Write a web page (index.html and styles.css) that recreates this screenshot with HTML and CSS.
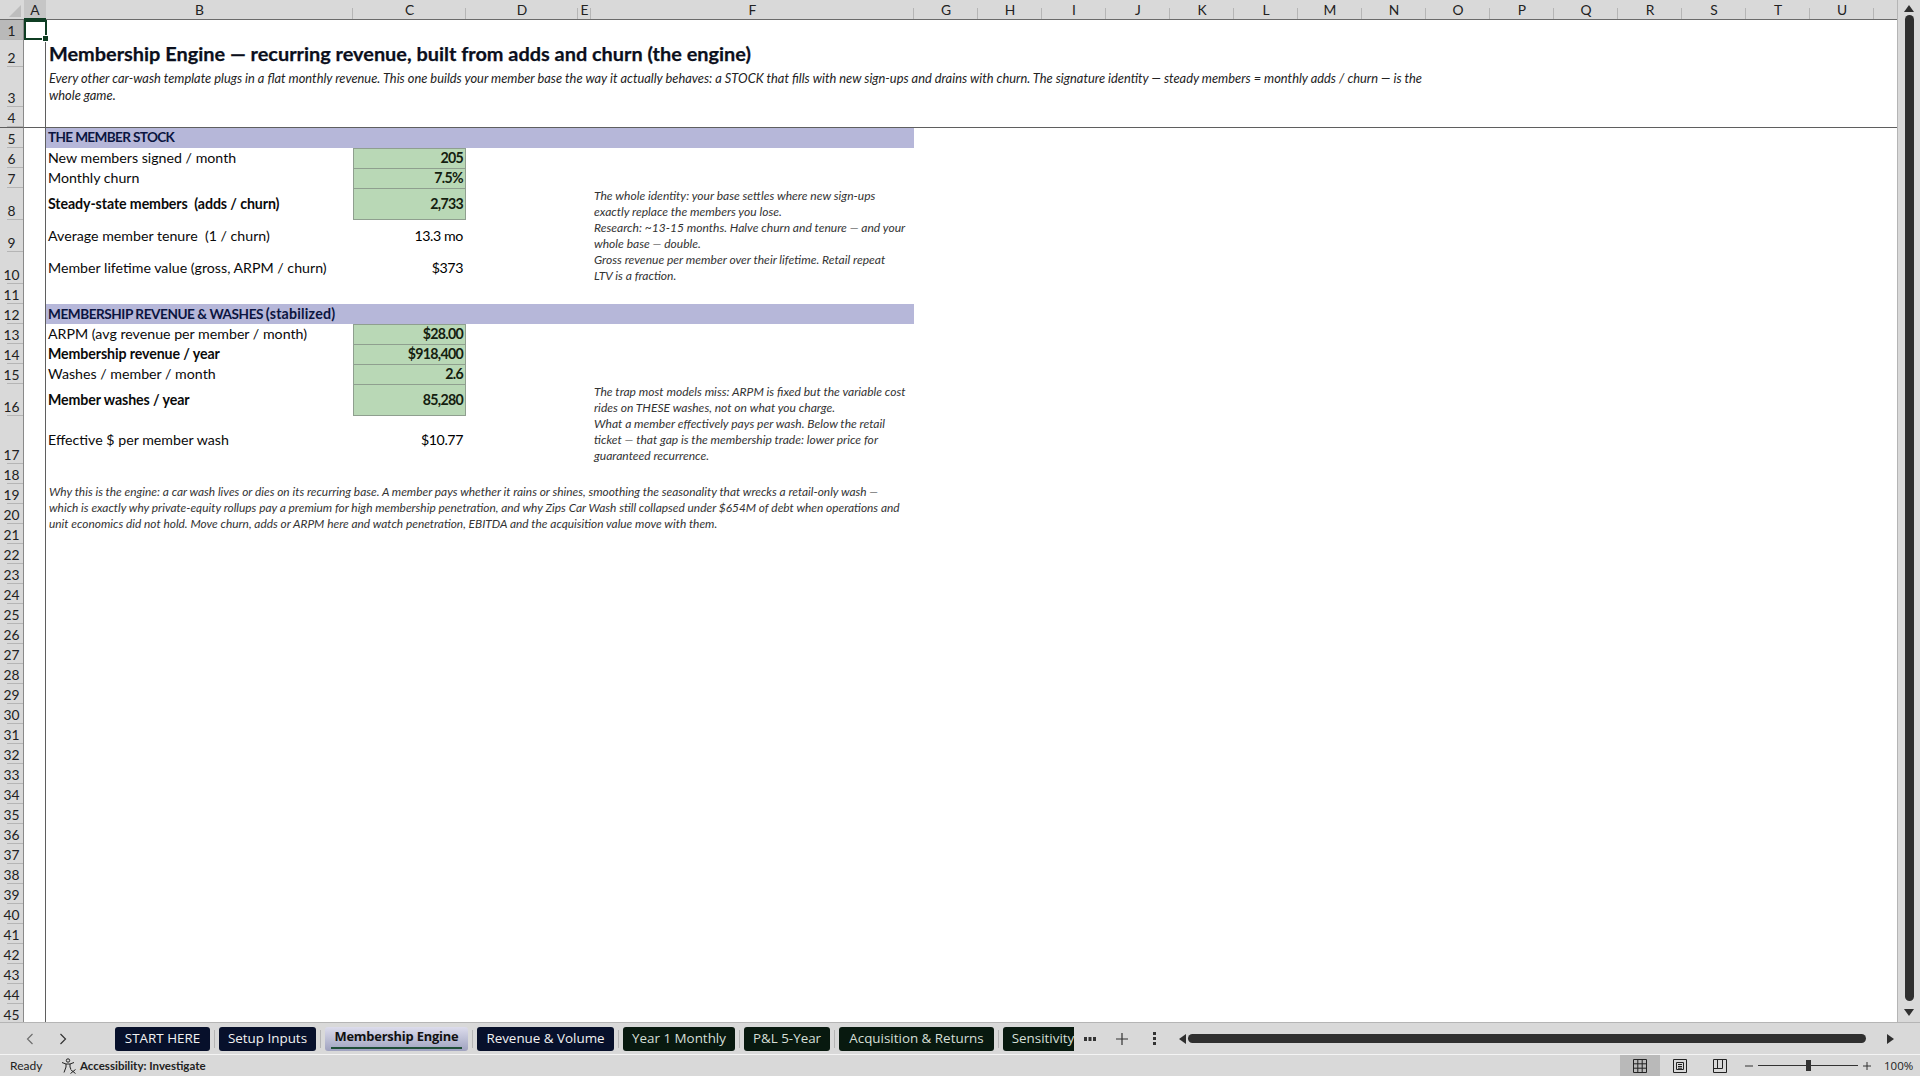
FILE: index.html
```html
<!DOCTYPE html>
<html lang="en">
<head>
    <meta charset="UTF-8">
    <title>Membership Engine</title>
    <link rel="stylesheet" href="styles.css">
</head>
<body>
    <div class="workspace">
        <div class="sheet">
            <div class="selection"></div>
            <table class="grid">
                <colgroup>
                    <col class="w-head"><col class="w-a"><col class="w-b"><col class="w-c"><col class="w-d"><col class="w-e"><col class="w-f">
                    <col class="w-n"><col class="w-n"><col class="w-n"><col class="w-n"><col class="w-n"><col class="w-n"><col class="w-n"><col class="w-n">
                    <col class="w-n"><col class="w-n"><col class="w-n"><col class="w-n"><col class="w-n"><col class="w-n"><col class="w-n"><col class="w-v">
                </colgroup>
                <thead>
                    <tr>
                        <th class="corner"><svg width="12" height="12" viewBox="0 0 12 12"><path d="M12 0V12H0Z" fill="#bdbdbd"/></svg></th>
                        <th class="ch on">A</th><th class="ch">B</th><th class="ch">C</th><th class="ch">D</th><th class="ch">E</th><th class="ch">F</th>
                        <th class="ch">G</th><th class="ch">H</th><th class="ch">I</th><th class="ch">J</th><th class="ch">K</th><th class="ch">L</th><th class="ch">M</th><th class="ch">N</th>
                        <th class="ch">O</th><th class="ch">P</th><th class="ch">Q</th><th class="ch">R</th><th class="ch">S</th><th class="ch">T</th><th class="ch">U</th><th class="ch blank"></th>
                    </tr>
                </thead>
                <tbody>
                    <tr class="h20"><th class="rh on">1</th><td class="a"></td><td colspan="21"></td></tr>
                    <tr class="h27"><th class="rh">2</th><td class="a"></td><td colspan="21" class="title">Membership Engine — recurring revenue, built from adds and churn (the engine)</td></tr>
                    <tr class="h40"><th class="rh">3</th><td class="a"></td><td colspan="21" class="note sub">Every other car-wash template plugs in a flat monthly revenue. This one builds your member base the way it actually behaves: a STOCK that fills with new sign-ups and drains with churn. The signature identity — steady members = monthly adds / churn — is the<br>whole game.</td></tr>
                    <tr class="h21 frozen"><th class="rh">4</th><td class="a"></td><td colspan="21"></td></tr>

                    <tr class="h20"><th class="rh">5</th><td class="a"></td><td colspan="5" class="band tight">THE MEMBER STOCK</td><td colspan="16"></td></tr>
                    <tr class="h20"><th class="rh">6</th><td class="a"></td><td class="label">New members signed / month</td><td class="val input">205</td><td colspan="18"></td></tr>
                    <tr class="h20"><th class="rh">7</th><td class="a"></td><td class="label">Monthly churn</td><td class="val input">7.5%</td><td colspan="18"></td></tr>
                    <tr class="h32"><th class="rh">8</th><td class="a"></td><td class="label strong">Steady-state members&nbsp; (adds / churn)</td><td class="val input">2,733</td><td colspan="2"></td><td class="note">The whole identity: your base settles where new sign-ups<br>exactly replace the members you lose.</td><td colspan="16"></td></tr>
                    <tr class="h32"><th class="rh">9</th><td class="a"></td><td class="label">Average member tenure&nbsp; (1 / churn)</td><td class="val">13.3 mo</td><td colspan="2"></td><td class="note">Research: ~13-15 months. Halve churn and tenure — and your<br>whole base — double.</td><td colspan="16"></td></tr>
                    <tr class="h32"><th class="rh">10</th><td class="a"></td><td class="label">Member lifetime value (gross, ARPM / churn)</td><td class="val">$373</td><td colspan="2"></td><td class="note">Gross revenue per member over their lifetime. Retail repeat<br>LTV is a fraction.</td><td colspan="16"></td></tr>
                    <tr class="h20"><th class="rh">11</th><td class="a"></td><td colspan="21"></td></tr>

                    <tr class="h20"><th class="rh">12</th><td class="a"></td><td colspan="5" class="band">MEMBERSHIP REVENUE &amp; WASHES <span class="lower">(stabilized)</span></td><td colspan="16"></td></tr>
                    <tr class="h20"><th class="rh">13</th><td class="a"></td><td class="label">ARPM (avg revenue per member / month)</td><td class="val input">$28.00</td><td colspan="18"></td></tr>
                    <tr class="h20"><th class="rh">14</th><td class="a"></td><td class="label strong">Membership revenue / year</td><td class="val input">$918,400</td><td colspan="18"></td></tr>
                    <tr class="h20"><th class="rh">15</th><td class="a"></td><td class="label">Washes / member / month</td><td class="val input">2.6</td><td colspan="18"></td></tr>
                    <tr class="h32"><th class="rh">16</th><td class="a"></td><td class="label strong">Member washes / year</td><td class="val input">85,280</td><td colspan="2"></td><td class="note">The trap most models miss: ARPM is fixed but the variable cost<br>rides on THESE washes, not on what you charge.</td><td colspan="16"></td></tr>
                    <tr class="h48"><th class="rh">17</th><td class="a"></td><td class="label">Effective $ per member wash</td><td class="val">$10.77</td><td colspan="2"></td><td class="note">What a member effectively pays per wash. Below the retail<br>ticket — that gap is the membership trade: lower price for<br>guaranteed recurrence.</td><td colspan="16"></td></tr>
                    <tr class="h20"><th class="rh">18</th><td class="a"></td><td colspan="21"></td></tr>

                    <tr class="h20"><th class="rh">19</th><td class="a"></td><td colspan="5" rowspan="3" class="note why">Why this is the engine: a car wash lives or dies on its recurring base. A member pays whether it rains or shines, smoothing the seasonality that wrecks a retail-only wash —<br>which is exactly why private-equity rollups pay a premium for high membership penetration, and why Zips Car Wash still collapsed under $654M of debt when operations and<br>unit economics did not hold. Move churn, adds or ARPM here and watch penetration, EBITDA and the acquisition value move with them.</td><td colspan="16"></td></tr>
                    <tr class="h20"><th class="rh">20</th><td class="a"></td><td colspan="16"></td></tr>
                    <tr class="h20"><th class="rh">21</th><td class="a"></td><td colspan="16"></td></tr>

                    <tr class="h20"><th class="rh">22</th><td class="a"></td><td colspan="21"></td></tr>
                    <tr class="h20"><th class="rh">23</th><td class="a"></td><td colspan="21"></td></tr>
                    <tr class="h20"><th class="rh">24</th><td class="a"></td><td colspan="21"></td></tr>
                    <tr class="h20"><th class="rh">25</th><td class="a"></td><td colspan="21"></td></tr>
                    <tr class="h20"><th class="rh">26</th><td class="a"></td><td colspan="21"></td></tr>
                    <tr class="h20"><th class="rh">27</th><td class="a"></td><td colspan="21"></td></tr>
                    <tr class="h20"><th class="rh">28</th><td class="a"></td><td colspan="21"></td></tr>
                    <tr class="h20"><th class="rh">29</th><td class="a"></td><td colspan="21"></td></tr>
                    <tr class="h20"><th class="rh">30</th><td class="a"></td><td colspan="21"></td></tr>
                    <tr class="h20"><th class="rh">31</th><td class="a"></td><td colspan="21"></td></tr>
                    <tr class="h20"><th class="rh">32</th><td class="a"></td><td colspan="21"></td></tr>
                    <tr class="h20"><th class="rh">33</th><td class="a"></td><td colspan="21"></td></tr>
                    <tr class="h20"><th class="rh">34</th><td class="a"></td><td colspan="21"></td></tr>
                    <tr class="h20"><th class="rh">35</th><td class="a"></td><td colspan="21"></td></tr>
                    <tr class="h20"><th class="rh">36</th><td class="a"></td><td colspan="21"></td></tr>
                    <tr class="h20"><th class="rh">37</th><td class="a"></td><td colspan="21"></td></tr>
                    <tr class="h20"><th class="rh">38</th><td class="a"></td><td colspan="21"></td></tr>
                    <tr class="h20"><th class="rh">39</th><td class="a"></td><td colspan="21"></td></tr>
                    <tr class="h20"><th class="rh">40</th><td class="a"></td><td colspan="21"></td></tr>
                    <tr class="h20"><th class="rh">41</th><td class="a"></td><td colspan="21"></td></tr>
                    <tr class="h20"><th class="rh">42</th><td class="a"></td><td colspan="21"></td></tr>
                    <tr class="h20"><th class="rh">43</th><td class="a"></td><td colspan="21"></td></tr>
                    <tr class="h20"><th class="rh">44</th><td class="a"></td><td colspan="21"></td></tr>
                    <tr class="h20"><th class="rh">45</th><td class="a"></td><td colspan="21"></td></tr>
                </tbody>
            </table>
        </div>
        <div class="vscroll">
            <svg width="10" height="7" viewBox="0 0 10 7"><path d="M5 0L10 7H0Z" fill="#2f2f2f"/></svg>
            <div class="vthumb"></div>
            <svg width="10" height="7" viewBox="0 0 10 7"><path d="M0 0H10L5 7Z" fill="#2f2f2f"/></svg>
        </div>
    </div>

    <div class="tabbar">
        <div class="tabnav">
            <svg width="8" height="12" viewBox="0 0 8 12"><path d="M6.5 1L1.5 6L6.5 11" fill="none" stroke="#6e6e6e" stroke-width="1.2"/></svg>
            <svg width="8" height="12" viewBox="0 0 8 12"><path d="M1.5 1L6.5 6L1.5 11" fill="none" stroke="#333" stroke-width="1.2"/></svg>
        </div>
        <div class="tabstrip">
            <div class="tab navy t-start">START HERE</div>
            <div class="tab navy t-setup">Setup Inputs</div>
            <div class="tab active t-member"><span>Membership Engine</span></div>
            <div class="tab navy t-rev">Revenue &amp; Volume</div>
            <div class="tab forest t-year">Year 1 Monthly</div>
            <div class="tab forest t-pl">P&amp;L 5-Year</div>
            <div class="tab forest t-acq">Acquisition &amp; Returns</div>
            <div class="tab forest t-sens">Sensitivity</div>
        </div>
        <div class="tabtools">
            <svg class="more" width="12" height="4" viewBox="0 0 12 4"><path d="M0 0H3V4H0ZM4.5 0H7.5V4H4.5ZM9 0H12V4H9Z" fill="#333"/></svg>
            <svg class="plus" width="14" height="14" viewBox="0 0 14 14"><path d="M7 1V13M1 7H13" stroke="#333" stroke-width="1.2"/></svg>
            <svg class="dots" width="3" height="13" viewBox="0 0 3 13"><path d="M0 0H3V3H0ZM0 5H3V8H0ZM0 10H3V13H0Z" fill="#333"/></svg>
        </div>
        <div class="hscroll">
            <svg width="7" height="10" viewBox="0 0 7 10"><path d="M7 0V10L0 5Z" fill="#2f2f2f"/></svg>
            <div class="hthumb"></div>
            <svg width="7" height="10" viewBox="0 0 7 10"><path d="M0 0L7 5L0 10Z" fill="#2f2f2f"/></svg>
        </div>
    </div>

    <div class="statusbar">
        <span class="ready">Ready</span>
        <svg class="a11y" width="16" height="16" viewBox="0 0 16 16" fill="none" stroke="#222" stroke-width="1"><circle cx="7" cy="2.5" r="1.7"/><path d="M1 4.5L5 6V9L3 14.5M13 4.5L9 6V9L9.8 11M5 6H9"/><path d="M9.5 11.5L14.5 15.5M14.5 11.5L9.5 15.5"/></svg>
        <span class="a11y-text">Accessibility: Investigate</span>
        <div class="status-right">
            <div class="view on"><svg width="14" height="14" viewBox="0 0 14 14" fill="none" stroke="#222"><path d="M.5.5H13.5V13.5H.5ZM.5 4.8H13.5M.5 9.2H13.5M4.8.5V13.5M9.2.5V13.5"/></svg></div>
            <div class="view"><svg width="14" height="14" viewBox="0 0 14 14" fill="none" stroke="#222"><path d="M.5.5H13.5V13.5H.5ZM3.5 3.5H10.5V10.5H3.5ZM5 5.5H9M5 7.5H9M5 9.2H9"/></svg></div>
            <div class="view"><svg width="14" height="14" viewBox="0 0 14 14" fill="none" stroke="#222"><path d="M.5.5H13.5V13.5H.5ZM.5 9.5H9.5M4.5.5V9.5M9.5.5V9.5"/></svg></div>
            <svg class="zoom-btn" width="8" height="8" viewBox="0 0 8 8"><path d="M0 4H8" stroke="#333"/></svg>
            <div class="slider"><div class="knob"></div></div>
            <svg class="zoom-btn" width="8" height="8" viewBox="0 0 8 8"><path d="M0 4H8M4 0V8" stroke="#333"/></svg>
            <span class="zoom-val">100%</span>
        </div>
    </div>
</body>
</html>
```

FILE: styles.css
```css
* {
    box-sizing: border-box;
}
html, body {
    height: 100%;
}
body {
    margin: 0;
    background: #d9d9d9;
    color: #000;
    font-family: Lato, "Liberation Sans", sans-serif;
    font-size: 14.2px;
    display: flex;
    flex-direction: column;
    overflow: hidden;
}

/* sheet */
.workspace {
    height: 1022px;
    display: flex;
}
.sheet {
    position: relative;
    width: 1898px;
    overflow: hidden;
    background: #fff;
    border-right: 1px solid #b5b5b5;
}
.selection {
    position: absolute;
    left: 24px;
    top: 20px;
    width: 23px;
    height: 20px;
    border: 2px solid #0f3d23;
}
.selection::after {
    content: "";
    position: absolute;
    right: -4px;
    bottom: -4px;
    width: 5px;
    height: 5px;
    background: #0f3d23;
    border: 1px solid #fff;
}
.grid {
    table-layout: fixed;
    width: 1898px;
    border-collapse: separate;
    border-spacing: 0;
}
.w-head { width: 24px; }
.w-a { width: 22px; }
.w-b { width: 307px; }
.w-c { width: 113px; }
.w-d { width: 112px; }
.w-e { width: 13px; }
.w-f { width: 323px; }
.w-n { width: 64px; }
.w-v { width: 24px; }

.grid td, .grid th {
    padding: 0;
}
.corner, .ch {
    height: 20px;
    background-color: #d9d9d9;
    border-bottom: 1px solid #6b6b6b;
}
.corner {
    text-align: right;
    vertical-align: bottom;
    line-height: 0;
}
.corner svg {
    margin-right: 3px;
    margin-bottom: 2px;
}
.ch {
    font-size: 13.8px;
    font-weight: 400;
    color: #222;
    background-image: linear-gradient(#b5b5b5, #b5b5b5);
    background-size: 1px 11px;
    background-position: right bottom;
    background-repeat: no-repeat;
}
.ch.on {
    background-color: #c6c6c6;
    background-image: none;
    border-bottom: 2px solid #0f3d23;
}
.grid .rh {
    width: 24px;
    padding-bottom: 1px;
    font-size: 13.8px;
    font-weight: 400;
    color: #222;
    text-align: center;
    vertical-align: bottom;
    line-height: 17px;
    background-color: #d9d9d9;
    background-image: linear-gradient(#b5b5b5, #b5b5b5);
    background-size: 16px 1px;
    background-position: right bottom;
    background-repeat: no-repeat;
    border-right: 1px solid #8a8a8a;
}
.grid .rh.on {
    background-color: #b9b9b9;
}
.a {
    border-right: 1px solid #5f5f5f;
}
.h20 { height: 20px; }
.h21 { height: 21px; }
.h27 { height: 27px; }
.h32 { height: 32px; }
.h40 { height: 40px; }
.h48 { height: 48px; }
.frozen th, .frozen td {
    border-bottom: 1px solid #5f5f5f;
}

/* cells */
.grid .title {
    font-size: 19.9px;
    font-weight: 700;
    color: #0b0f1c;
    -webkit-text-stroke: .25px #0b0f1c;
    padding: 0 0 3px 3px;
    white-space: nowrap;
    vertical-align: bottom;
    line-height: 22px;
}
.grid .note {
    font-size: 12.05px;
    font-style: italic;
    color: #333;
    line-height: 16px;
    white-space: nowrap;
    padding-left: 3px;
}
.grid .sub {
    font-size: 12.85px;
    line-height: 17px;
    color: #222;
}
.grid .why {
    font-size: 11.9px;
    vertical-align: top;
}
.grid .band {
    font-size: 13.6px;
    letter-spacing: -.45px;
    background: #b6b7d9;
    color: #0b1540;
    font-weight: 700;
    padding: 0 0 2px 2px;
    white-space: nowrap;
}
.tight {
    letter-spacing: -.65px !important;
}
.lower {
    letter-spacing: .2px;
    font-size: 14.2px;
}
.grid .label {
    padding: 0 0 2px 2px;
    white-space: nowrap;
    color: #0a0a0a;
}
.grid .h32 .label, .grid .h32 .val {
    padding-bottom: 1px;
}
.strong {
    font-weight: 700;
    letter-spacing: -.1px;
}
.grid .val {
    text-align: right;
    padding: 0 3px 2px 0;
    white-space: nowrap;
    letter-spacing: -.4px;
}
.grid .input {
    padding-right: 2px;
    background: #b9d8b6;
    font-weight: 700;
    letter-spacing: -.7px;
    color: #14200f;
    border: 1px solid #8f9f8f;
    border-bottom-width: 0;
}
tr.h32 .input {
    border-bottom-width: 1px;
}

/* vertical scrollbar */
.vscroll {
    flex: 1;
    display: flex;
    flex-direction: column;
    align-items: center;
    padding: 5px 0 4px;
}
.vthumb {
    width: 9px;
    height: 986px;
    margin: 3px 0 8px;
    background: #2f2f2f;
    border-radius: 5px;
}

/* sheet tabs */
.tabbar {
    height: 33px;
    display: flex;
    align-items: center;
    border-top: 1px solid #b5b5b5;
    border-bottom: 1px solid #f4f4f4;
}
.tabnav {
    width: 115px;
    display: flex;
    gap: 25px;
    padding-left: 26px;
}
.tabstrip {
    width: 959px;
    display: flex;
    gap: 9px;
    overflow: hidden;
    font-family: "Open Sans", sans-serif;
    font-size: 13.4px;
}
.tab {
    flex: none;
    height: 24px;
    line-height: 22px;
    text-align: center;
    border-radius: 3px;
    position: relative;
    white-space: nowrap;
}
.tab::after {
    content: "";
    position: absolute;
    right: -5px;
    top: 3px;
    height: 18px;
    width: 1px;
    background: #b5b5b5;
}
.navy {
    background: #07102b;
    color: #f2f2f2;
}
.forest {
    background: #08190f;
    color: #d5dfd6;
}
.active {
    background: linear-gradient(#dcdcec, #9fa2bf);
    color: #111;
    font-size: 12.9px;
    font-weight: 700;
    letter-spacing: -.2px;
    line-height: 19px;
}
.active span {
    display: block;
    margin: 0 6px;
    height: 22px;
    border-bottom: 2px solid #1f4e38;
}
.t-start { width: 95px; }
.t-setup { width: 97px; }
.t-member { width: 143px; }
.t-rev { width: 137px; }
.t-year { width: 112px; }
.t-pl { width: 86px; }
.t-acq { width: 155px; }
.t-sens { width: 80px; }

.tabtools {
    width: 97px;
    display: flex;
    align-items: center;
    padding-left: 10px;
}
.more { margin-right: 19px; }
.dots { margin-left: 24px; }
.hscroll {
    flex: 1;
    display: flex;
    align-items: center;
    padding-left: 8px;
}
.hthumb {
    width: 678px;
    height: 9px;
    margin: 0 21px 0 2px;
    background: #2f2f2f;
    border-radius: 5px;
}

/* status bar */
.statusbar {
    flex: 1;
    display: flex;
    align-items: center;
    font-size: 12px;
    color: #222;
    padding-left: 10px;
}
.ready {
    width: 51px;
}
.a11y {
    margin-right: 3px;
}
.a11y-text {
    font-weight: 700;
    font-size: 11.5px;
}
.status-right {
    margin-left: auto;
    height: 100%;
    display: flex;
    align-items: center;
}
.view {
    width: 40px;
    height: 100%;
    display: flex;
    align-items: center;
    justify-content: center;
}
.view.on {
    background: #b9b9b9;
}
.zoom-btn {
    margin: 0 5px;
}
.slider {
    width: 100px;
    height: 1px;
    background: #333;
    display: flex;
    align-items: center;
    justify-content: center;
}
.knob {
    flex: none;
    width: 5px;
    height: 11px;
    background: #333;
}
.zoom-val {
    width: 44px;
    padding-left: 8px;
    font-family: "Open Sans", sans-serif;
    font-size: 11.5px;
}
```
